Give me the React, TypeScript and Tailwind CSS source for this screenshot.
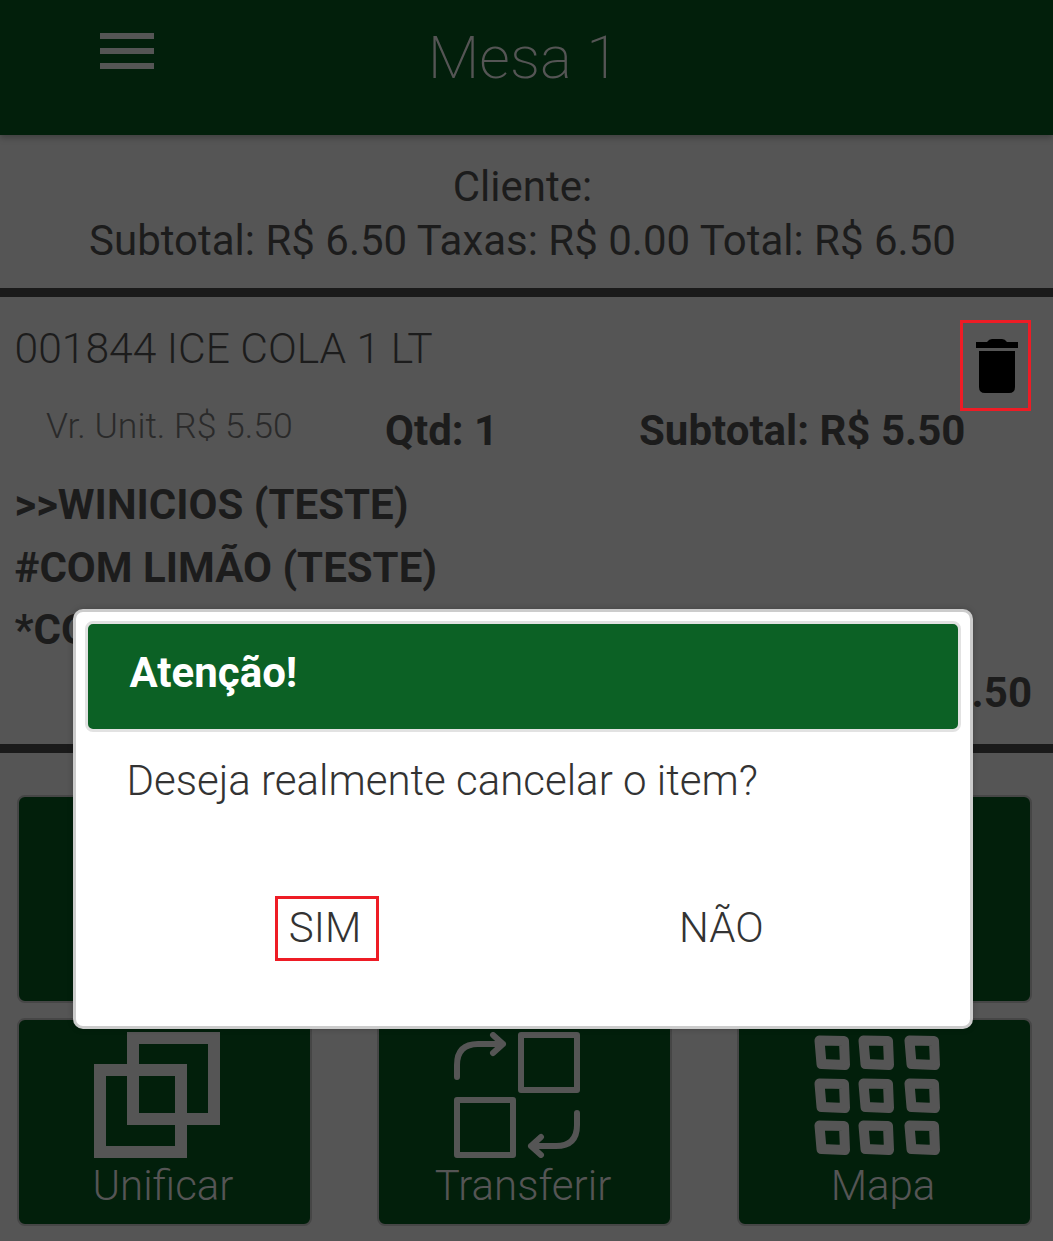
const MapIcon = () => {
  const xs = [0, 44, 90];
  const ys = [0, 43, 85];
  return (
    <svg width="126" height="120" viewBox="0 0 126 120" className="block">
      {ys.map((y) =>
        xs.map((x) => (
          <path
            key={`${x}-${y}`}
            transform={`translate(${x} ${y})`}
            d="M5.5 5.5 L30 6 L31 30 L7.5 29 Z"
            fill="none"
            stroke="#555555"
            strokeWidth="10"
            strokeLinejoin="round"
          />
        ))
      )}
    </svg>
  );
};

const UnifyIcon = () => (
  <svg width="126" height="126" viewBox="0 0 126 126" className="block">
    <rect x="6" y="38" width="81" height="82" fill="none" stroke="#555555" strokeWidth="12" />
    <rect x="39" y="6" width="81" height="81" fill="none" stroke="#555555" strokeWidth="12" />
  </svg>
);

const TransferIcon = () => (
  <svg width="126" height="126" viewBox="0 0 126 126" className="block">
    <g fill="none" stroke="#555555" strokeWidth="6" strokeLinecap="round" strokeLinejoin="round">
      <rect x="67" y="3" width="56" height="55" />
      <rect x="3" y="68" width="56" height="55" />
      <path d="M3 45 V33 Q3 12 24 12 H49 M39 3 L49 12 L39 21" />
      <path d="M123 81 V93 Q123 114 102 114 H77 M87 105 L77 114 L87 123" />
    </g>
  </svg>
);

const TrashIcon = () => (
  <svg width="42" height="54" viewBox="0 0 42 54" className="block">
    <path
      fill="#000000"
      d="M0 9 V3 H11 Q13 0 16 0 H26 Q29 0 31 3 H42 V9 Z M3 12 H39 V48 Q39 54 33 54 H9 Q3 54 3 48 Z"
    />
  </svg>
);

const Tile = ({ icon, label }: { icon?: React.ReactNode; label?: string }) => (
  <div className="flex h-[208px] w-[295px] flex-col items-center rounded-[8px] border-2 border-[#464646] bg-[#021f0b] pt-[12px]">
    {icon && <div className="mr-[15px]">{icon}</div>}
    {label && <span className="mr-[3px] mt-[2px] text-[42px] font-light leading-[52px] text-[#555555]">{label}</span>}
  </div>
);

export default function App() {
  return (
    <div
      className="relative h-[1241px] w-[1053px] overflow-hidden bg-[#555555] text-[#1c1c1c]"
      style={{ fontFamily: "Roboto, sans-serif" }}
    >
      <header className="relative flex h-[135px] items-center justify-center bg-[#021f0b] shadow-[0_3px_6px_rgba(0,0,0,0.25)]">
        <div className="absolute left-[100px] top-[33px] flex w-[54px] flex-col gap-[9px]">
          <span className="h-[6px] bg-[#555555]" />
          <span className="h-[6px] bg-[#555555]" />
          <span className="h-[6px] bg-[#555555]" />
        </div>
        <h1 className="mb-[19px] mr-[6px] text-[60px] font-extralight leading-none text-[#555555]">Mesa 1</h1>
      </header>

      <section className="h-[153px] pr-[8px] pt-[25px] text-center text-[42px] font-normal leading-[54px]">
        <div>Cliente:</div>
        <div>Subtotal: R$ 6.50 Taxas: R$ 0.00 Total: R$ 6.50</div>
      </section>

      <section className="relative h-[465px] border-y-[9px] border-[#1a1a1a] px-[14px] pt-[26px]">
        <div className="ml-[0.5px] text-[42.6px] font-light leading-[50px]">001844 ICE COLA 1 LT</div>
        <div className="mt-[32px] flex h-[50px] items-center">
          <span className="ml-[32px] w-[339px] pb-[6px] text-[35.6px] font-light text-[#2a2a2a]">Vr. Unit. R$ 5.50</span>
          <span className="w-[254px] text-[42px] font-bold">Qtd: 1</span>
          <span className="text-[42px] font-bold">Subtotal: R$ 5.50</span>
        </div>
        <div className="ml-[0.5px] mt-[19px] text-[42px] font-bold leading-[62.7px]">
          <div>&gt;&gt;WINICIOS (TESTE)</div>
          <div>#COM LIMÃO (TESTE)</div>
          <div>*COM GELO (TESTE)</div>
          <div className="pr-[7px] text-right">Total: R$ 6.50</div>
        </div>
        <div className="absolute left-[960px] top-[23px] flex h-[91px] w-[71px] items-start justify-center border-[3px] border-[#ee1c25] pl-[2px] pt-[16px]">
          <TrashIcon />
        </div>
      </section>

      <section className="mt-[42px] flex flex-col gap-[15px] px-[17px]">
        <div className="flex gap-[65px]">
          <Tile />
          <Tile />
          <Tile />
        </div>
        <div className="flex gap-[65px]">
          <Tile icon={<UnifyIcon />} label="Unificar" />
          <Tile icon={<TransferIcon />} label="Transferir" />
          <Tile icon={<div className="py-[3px]"><MapIcon /></div>} label="Mapa" />
        </div>
      </section>

      <div className="absolute left-[73px] top-[609px] h-[420px] w-[900px] rounded-[10px] border-[3px] border-[#cccccc] bg-white p-[9px] shadow-[0_0_6px_rgba(0,0,0,0.2)]">
        <div className="flex h-[111px] items-start rounded-[8px] border-[3px] border-[#e2e2e2] bg-[#0c6125] pl-[41.5px] pt-[24px]">
          <span className="text-[42px] font-bold leading-[50px] text-white">Atenção!</span>
        </div>
        <p className="ml-[41.5px] mt-[21px] text-[42px] font-light leading-[56px] text-[#333333]">
          Deseja realmente cancelar o item?
        </p>
        <div className="mt-[90px] flex h-[60px]">
          <span className="-mt-[3px] ml-[190px] flex h-[65px] w-[104px] items-center justify-center border-[3px] border-[#ee1c25] pb-[2px] pr-[4px] text-[42px] font-light text-[#333333]">
            SIM
          </span>
          <span className="ml-[300px] flex h-[60px] items-center pb-[4px] text-[42px] font-light text-[#333333]">NÃO</span>
        </div>
      </div>
    </div>
  );
}
